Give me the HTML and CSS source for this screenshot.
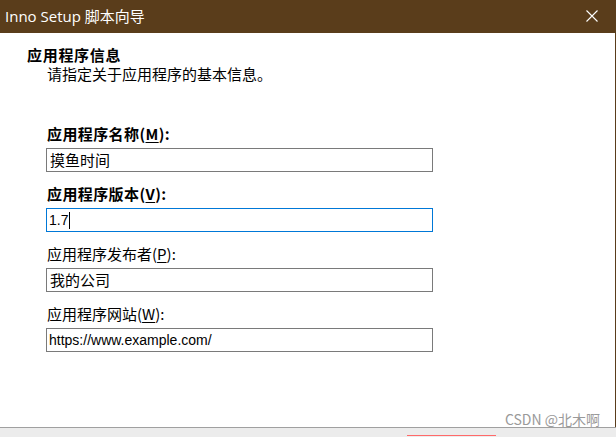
FILE: index.html
```html
<!DOCTYPE html>
<html lang="zh-CN">
<head>
<meta charset="utf-8">
<title>Inno Setup 脚本向导</title>
<link rel="stylesheet" href="styles.css">
</head>
<body>
<div class="window">
  <div class="titlebar">
    <span class="title">Inno Setup 脚本向导</span>
    <svg class="close" width="12" height="12" viewBox="0 0 12 12"><path d="M0.5 0.5 L11.5 11.5 M11.5 0.5 L0.5 11.5" stroke="#fff" stroke-width="1.1" fill="none"/></svg>
  </div>
  <div class="body">
    <div class="header">
      <div class="h-title">应用程序信息</div>
      <div class="h-sub">请指定关于应用程序的基本信息。</div>
    </div>
    <div class="form">
      <div class="field">
        <div class="label bold">应用程序名称(<u>M</u>):</div>
        <div class="input">摸鱼时间</div>
      </div>
      <div class="field">
        <div class="label bold">应用程序版本(<u>V</u>):</div>
        <div class="input focused">1.7<span class="caret"></span></div>
      </div>
      <div class="field">
        <div class="label">应用程序发布者(<u>P</u>):</div>
        <div class="input">我的公司</div>
      </div>
      <div class="field">
        <div class="label">应用程序网站(<u>W</u>):</div>
        <div class="input latin">https://www.example.com/</div>
      </div>
    </div>
    <div class="watermark">CSDN @北木啊</div>
  </div>
  <div class="footer"><span class="redline"></span></div>
</div>
</body>
</html>
```
FILE: styles.css
```css
html, body {
  margin: 0;
  padding: 0;
  background: #fff;
}
body {
  font-family: "Liberation Sans", "Noto Sans CJK SC", sans-serif;
  color: #000;
}
.window {
  width: 616px;
  height: 437px;
  display: flex;
  flex-direction: column;
  overflow: hidden;
}
.titlebar {
  height: 33px;
  flex: none;
  background: #5a3d1b;
  color: #fff;
  display: flex;
  align-items: center;
  justify-content: space-between;
  padding: 0 18px 2px 5px;
  box-sizing: border-box;
}
.title {
  font-family: "Open Sans", "Noto Sans CJK SC", sans-serif;
  font-size: 15px;
}
.close {
  display: block;
}
.body {
  flex: 1;
  position: relative;
  border-right: 1px solid #5a3d1b;
  padding: 12px 0 0 27px;
}
.header {
  font-family: "Noto Sans CJK SC", sans-serif;
  font-size: 15px;
  line-height: 19px;
}
.h-title {
  font-weight: bold;
  letter-spacing: 0.7px;
}
.h-sub {
  padding-left: 20px;
}
.form {
  padding: 38px 0 0 20px;
  display: flex;
  flex-direction: column;
}
.field {
  display: flex;
  flex-direction: column;
  margin-bottom: 9px;
}
.label {
  font-family: "Noto Sans CJK SC", sans-serif;
  font-size: 15px;
  line-height: 19px;
  height: 19px;
  margin-top: 3px;
  margin-bottom: 5px;
}
.label u {
  text-underline-offset: 2px;
}
.bold {
  font-weight: bold;
  letter-spacing: 0.4px;
}
.input {
  width: 387px;
  height: 24px;
  box-sizing: border-box;
  border: 1px solid #7a7a7a;
  margin-left: -1px;
  padding: 0 3px;
  font-family: "Noto Sans CJK SC", sans-serif;
  font-size: 15px;
  line-height: 22px;
  display: flex;
  align-items: center;
}
.input.focused {
  border-color: #0078d7;
  padding-left: 2px;
  font-family: "Liberation Sans", sans-serif;
  font-size: 14px;
}
.input.latin {
  font-family: "Liberation Sans", sans-serif;
  font-size: 14px;
  padding-left: 2px;
}
.caret {
  display: inline-block;
  width: 1px;
  height: 17px;
  background: #000;
  margin-left: 1px;
}
.watermark {
  position: absolute;
  right: 15px;
  bottom: -2px;
  font-family: "Noto Sans CJK SC", sans-serif;
  font-size: 14px;
  color: #9a9a9a;
}
.footer {
  height: 10px;
  flex: none;
  border-top: 1px solid #a0a0a0;
  background: #ececec;
  box-sizing: border-box;
  position: relative;
}
.redline {
  position: absolute;
  left: 407px;
  top: 7px;
  width: 89px;
  height: 1px;
  background: #ff6a6a;
}
```
